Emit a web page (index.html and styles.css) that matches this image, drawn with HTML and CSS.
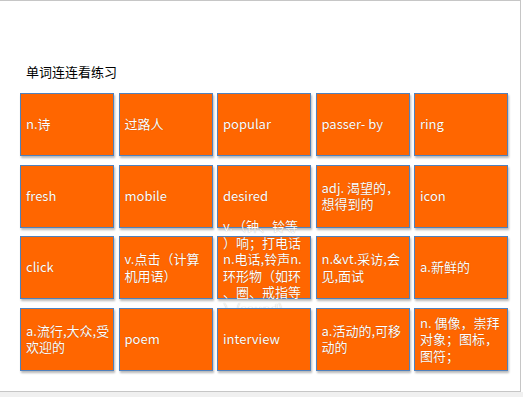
FILE: index.html
```html
<!DOCTYPE html>
<html lang="zh">
<head>
<meta charset="utf-8">
<title>单词连连看练习</title>
<link rel="stylesheet" href="styles.css">
</head>
<body>
<div class="slide">
  <div class="title">单词连连看练习</div>
  <div class="grid">
    <div class="cell"><span>n.诗</span></div>
    <div class="cell"><span>过路人</span></div>
    <div class="cell"><span>popular</span></div>
    <div class="cell"><span>passer- by</span></div>
    <div class="cell"><span>ring</span></div>

    <div class="cell"><span>fresh</span></div>
    <div class="cell"><span>mobile</span></div>
    <div class="cell"><span>desired</span></div>
    <div class="cell"><span>adj. 渴望的，<br>想得到的</span></div>
    <div class="cell"><span>icon</span></div>

    <div class="cell"><span>click</span></div>
    <div class="cell"><span>v.点击（计算<br>机用语）</span></div>
    <div class="cell"><span>v.（钟、铃等<br>）响；打电话<br>n.电话,铃声n.<br>环形物（如环<br>、圈、戒指等<br>）(sound)</span></div>
    <div class="cell"><span>n.&amp;vt.采访,会<br>见,面试</span></div>
    <div class="cell"><span>a.新鲜的</span></div>

    <div class="cell"><span>a.流行,大众,受<br>欢迎的</span></div>
    <div class="cell"><span>poem</span></div>
    <div class="cell"><span>interview</span></div>
    <div class="cell"><span>a.活动的,可移<br>动的</span></div>
    <div class="cell"><span>n. 偶像，崇拜<br>对象；图标，<br>图符；</span></div>
  </div>
</div>
<div class="statusbar"></div>
</body>
</html>
```

FILE: styles.css
```css
html, body {
  margin: 0;
  padding: 0;
  background: #ffffff;
}

body {
  width: 523px;
  height: 397px;
  overflow: hidden;
  font-family: "Noto Sans CJK SC", "Liberation Sans", sans-serif;
}

.slide {
  box-sizing: border-box;
  width: 521px;
  height: 392px;
  border-top: 1px solid #c6c6c6;
  border-right: 1px solid #c6c6c6;
  border-bottom: 1px solid #c6c6c6;
  background: #ffffff;
  padding: 63px 0 0 20px;
}

.title {
  margin-left: 6px;
  font-size: 13px;
  line-height: 16px;
  color: #000000;
}

.grid {
  margin-top: 13px;
  display: grid;
  grid-template-columns: repeat(5, 94px);
  grid-auto-rows: 63px;
  column-gap: 4.5px;
  row-gap: 8.6px;
}

.cell {
  position: relative;
  box-sizing: border-box;
  display: flex;
  align-items: center;
  padding: 0 4px 0 5px;
  background: #ff6600;
  border: 1px solid #4f81bd;
  box-shadow: 1px 2px 2px rgba(0, 0, 0, 0.28);
  color: #ffffff;
  font-size: 13px;
  line-height: 16.5px;
  white-space: nowrap;
  text-shadow: 0 0 1px rgba(0, 0, 0, 0.35);
}

.statusbar {
  height: 5px;
  background: #f0f0f0;
}
```
